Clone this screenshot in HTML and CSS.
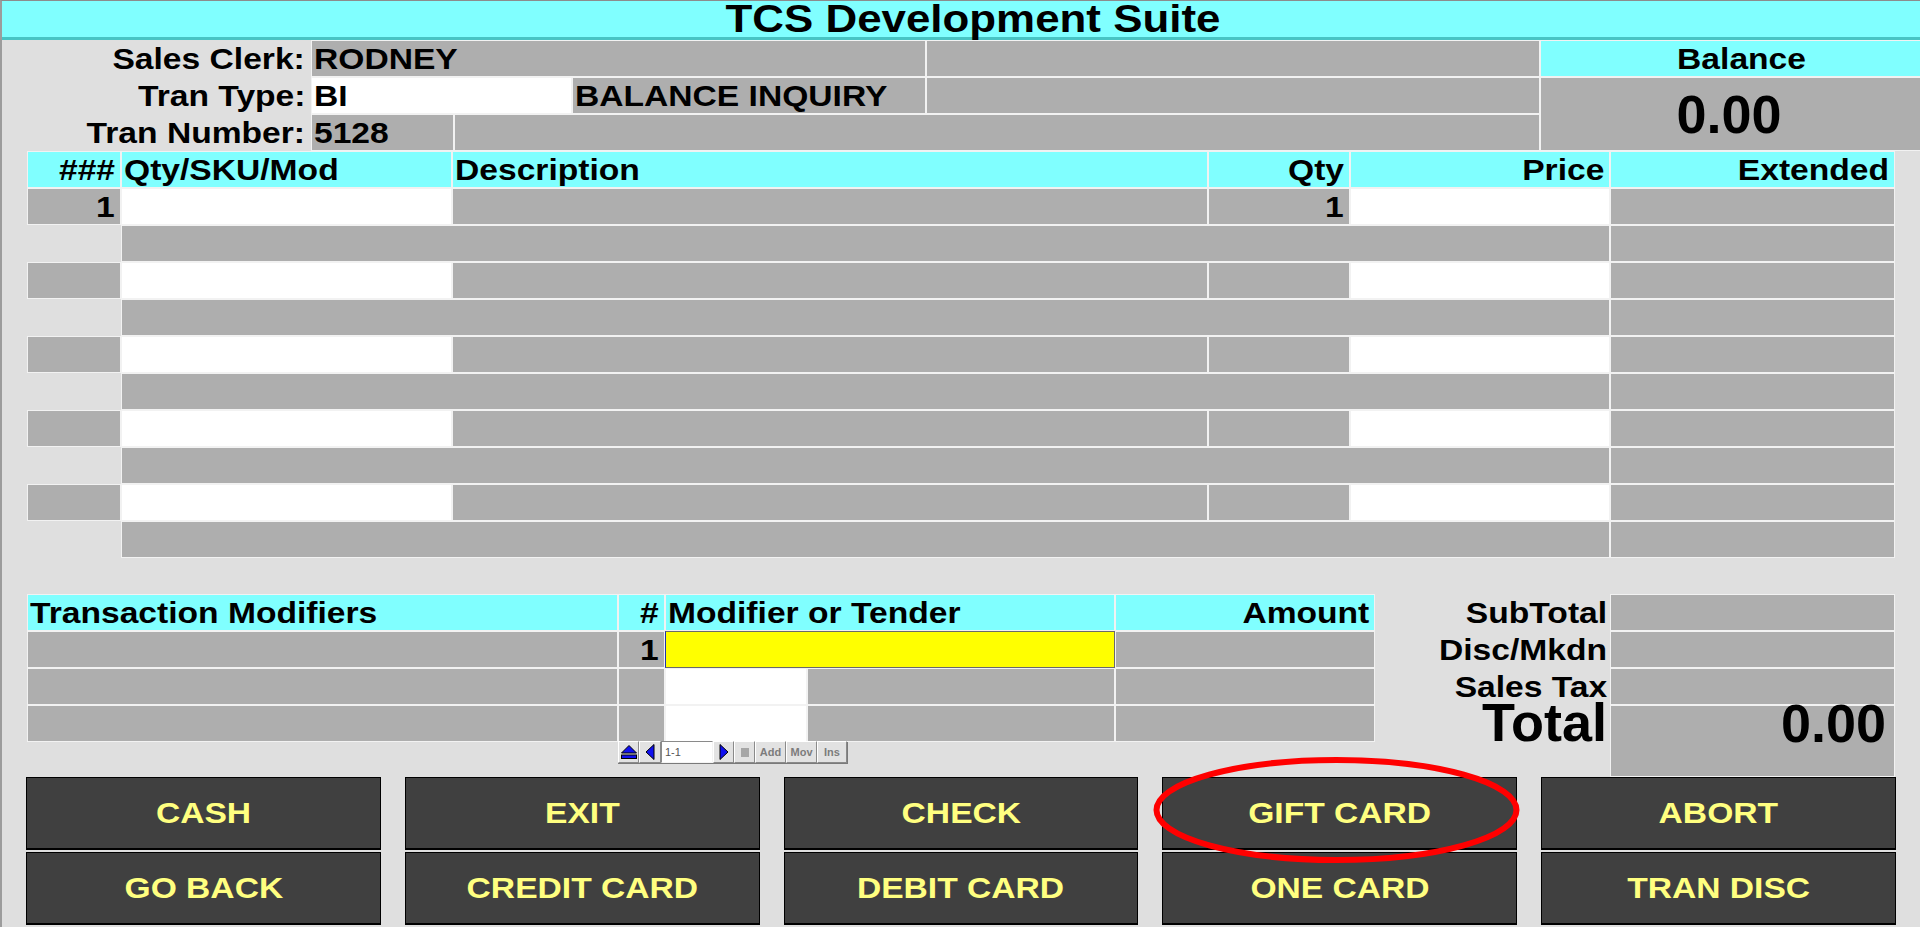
FILE: index.html
```html
<!DOCTYPE html>
<html lang="en">
<head>
<meta charset="utf-8">
<title>TCS Development Suite</title>
<link rel="stylesheet" href="styles.css">
</head>
<body>
<div class="app">
  <div class="title"><span class="t">TCS Development Suite</span></div>

  <div class="top">
    <div class="lbl"><span class="t">Sales Clerk:</span></div>
    <div class="cell g s3"><span class="t">RODNEY</span></div>
    <div class="cell g"></div>
    <div class="cell cy c"><span class="t">Balance</span></div>

    <div class="lbl"><span class="t">Tran Type:</span></div>
    <div class="cell w s2"><span class="t">BI</span></div>
    <div class="cell g"><span class="t">BALANCE INQUIRY</span></div>
    <div class="cell g"></div>
    <div class="cell g bal"><span>0.00</span></div>

    <div class="lbl"><span class="t">Tran Number:</span></div>
    <div class="cell g"><span class="t">5128</span></div>
    <div class="cell g s3"></div>
  </div>

  <div class="items">
    <div class="cell cy r"><span class="t">###</span></div>
    <div class="cell cy"><span class="t">Qty/SKU/Mod</span></div>
    <div class="cell cy"><span class="t">Description</span></div>
    <div class="cell cy r"><span class="t">Qty</span></div>
    <div class="cell cy r"><span class="t">Price</span></div>
    <div class="cell cy r"><span class="t">Extended</span></div>

    <div class="cell g r"><span class="t">1</span></div>
    <div class="cell w"></div>
    <div class="cell g"></div>
    <div class="cell g r"><span class="t">1</span></div>
    <div class="cell w"></div>
    <div class="cell g"></div>
    <div class="cell e"></div>
    <div class="cell g s4"></div>
    <div class="cell g"></div>

    <div class="cell g"></div>
    <div class="cell w"></div>
    <div class="cell g"></div>
    <div class="cell g"></div>
    <div class="cell w"></div>
    <div class="cell g"></div>
    <div class="cell e"></div>
    <div class="cell g s4"></div>
    <div class="cell g"></div>

    <div class="cell g"></div>
    <div class="cell w"></div>
    <div class="cell g"></div>
    <div class="cell g"></div>
    <div class="cell w"></div>
    <div class="cell g"></div>
    <div class="cell e"></div>
    <div class="cell g s4"></div>
    <div class="cell g"></div>

    <div class="cell g"></div>
    <div class="cell w"></div>
    <div class="cell g"></div>
    <div class="cell g"></div>
    <div class="cell w"></div>
    <div class="cell g"></div>
    <div class="cell e"></div>
    <div class="cell g s4"></div>
    <div class="cell g"></div>

    <div class="cell g"></div>
    <div class="cell w"></div>
    <div class="cell g"></div>
    <div class="cell g"></div>
    <div class="cell w"></div>
    <div class="cell g"></div>
    <div class="cell e"></div>
    <div class="cell g s4"></div>
    <div class="cell g"></div>
  </div>

  <div class="bottom">
    <div class="mods-wrap">
      <div class="mods">
        <div class="cell cy"><span class="t">Transaction Modifiers</span></div>
        <div class="cell cy r"><span class="t">#</span></div>
        <div class="cell cy s2"><span class="t">Modifier or Tender</span></div>
        <div class="cell cy r"><span class="t">Amount</span></div>

        <div class="cell g"></div>
        <div class="cell g r"><span class="t">1</span></div>
        <div class="cell y s2"></div>
        <div class="cell g"></div>

        <div class="cell g"></div>
        <div class="cell g"></div>
        <div class="cell w"></div>
        <div class="cell g"></div>
        <div class="cell g"></div>

        <div class="cell g"></div>
        <div class="cell g"></div>
        <div class="cell w"></div>
        <div class="cell g"></div>
        <div class="cell g"></div>
      </div>
      <div class="nav">
        <div class="nb w21">
          <svg width="18" height="18" viewBox="0 0 18 18"><polygon points="1.5,10 9,2.5 16.5,10" fill="#1010f0" stroke="#000" stroke-width="1"/><rect x="1.5" y="12" width="15" height="3.5" fill="#1010f0" stroke="#000" stroke-width="1"/></svg>
        </div>
        <div class="nb w22">
          <svg width="12" height="18" viewBox="0 0 12 18"><polygon points="10,1.5 2,9 10,16.5" fill="#1010f0" stroke="#000" stroke-width="1"/></svg>
        </div>
        <div class="nin">1-1</div>
        <div class="nb w21">
          <svg width="12" height="18" viewBox="0 0 12 18"><polygon points="2,1.5 10,9 2,16.5" fill="#1010f0" stroke="#000" stroke-width="1"/></svg>
        </div>
        <div class="nb w21"><span class="stop"></span></div>
        <div class="nb w31 nt">Add</div>
        <div class="nb w31 nt">Mov</div>
        <div class="nb w30 nt">Ins</div>
      </div>
    </div>

    <div class="totals">
      <div class="tl"><span class="t">SubTotal</span></div>
      <div class="cell g"></div>
      <div class="tl"><span class="t">Disc/Mkdn</span></div>
      <div class="cell g"></div>
      <div class="tl"><span class="t">Sales Tax</span></div>
      <div class="cell g"></div>
      <div class="tl total">Total</div>
      <div class="cell g tbox">0.00</div>
    </div>
  </div>

  <div class="buttons">
    <div class="btn"><span class="t">CASH</span></div>
    <div class="btn"><span class="t">EXIT</span></div>
    <div class="btn"><span class="t">CHECK</span></div>
    <div class="btn"><span class="t">GIFT CARD</span></div>
    <div class="btn"><span class="t">ABORT</span></div>
    <div class="btn"><span class="t">GO BACK</span></div>
    <div class="btn"><span class="t">CREDIT CARD</span></div>
    <div class="btn"><span class="t">DEBIT CARD</span></div>
    <div class="btn"><span class="t">ONE CARD</span></div>
    <div class="btn"><span class="t">TRAN DISC</span></div>
  </div>

  <svg class="ring" width="374" height="112" viewBox="0 0 374 112"><ellipse cx="186.5" cy="56" rx="180" ry="50" fill="none" stroke="#ff0000" stroke-width="6"/></svg>
</div>
</body>
</html>
```

FILE: styles.css
```css
* { box-sizing: border-box; }
html, body { margin: 0; padding: 0; }
body {
  background: #dfdfdf;
  font-family: "Liberation Sans", Arial, sans-serif;
  font-weight: bold;
  color: #000;
  overflow: hidden;
  width: 1920px;
  height: 927px;
}
.app {
  position: relative;
  width: 1944px;
  height: 927px;
  border-left: 2px solid #9c9c9c;
  border-top: 1px solid #8c8c8c;
  overflow: hidden;
}

/* stretched text (the original UI renders a little wide) */
.t {
  display: inline-block;
  transform: scaleX(1.12);
  transform-origin: left center;
}
.r { text-align: right; }
.c { text-align: center; }
.r .t, .lbl .t, .tl .t { transform-origin: right center; }
.c .t, .btn .t { transform-origin: center center; }

/* title */
.title {
  height: 39px;
  background: #80ffff;
  border-bottom: 3px solid #48c4c4;
  text-align: center;
  font-size: 39px;
  line-height: 36px;
}
.title .t { transform: scaleX(1.125); transform-origin: center center; }

/* generic cell */
.cell {
  height: 37px;
  border: 1px solid #f2f2f2;
  font-size: 30px;
  line-height: 35px;
  padding: 0 2px;
  white-space: nowrap;
  overflow: hidden;
}
.cell.r { padding: 0 5px 0 2px; }
.g { background: #aeaeae; }
.w { background: #ffffff; }
.cy { background: #80ffff; }
.y {
  background: #ffff00;
  border-color: #6a6a6a;
  border-left-color: #2233aa;
}
.e { background: transparent; border-color: transparent; }
.s2 { grid-column: span 2; }
.s3 { grid-column: span 3; }
.s4 { grid-column: span 4; }

/* header info block */
.top {
  display: grid;
  grid-template-columns: 309px 143px 118px 354px 614px 404px;
  grid-auto-rows: 37px;
}
.lbl {
  font-size: 30px;
  line-height: 37px;
  text-align: right;
  padding-right: 6px;
  white-space: nowrap;
}
.bal {
  grid-row: span 2;
  height: 74px;
  text-align: center;
  font-size: 54px;
  line-height: 72px;
  padding-right: 28px;
}

/* line items */
.items {
  display: grid;
  grid-template-columns: 94px 331px 756px 142px 260px 285px;
  grid-auto-rows: 37px;
  margin-left: 25px;
}

/* bottom area */
.bottom {
  display: flex;
  align-items: flex-start;
  margin-top: 36px;
}
.mods-wrap { margin-left: 25px; }
.mods {
  display: grid;
  grid-template-columns: 591px 47px 142px 308px 260px;
  grid-auto-rows: 37px;
}
.nav {
  display: flex;
  margin-left: 591px;
  margin-top: -1px;
  width: 230px;
  height: 23px;
  border-right: 1px solid #7a7a7a;
  border-bottom: 1px solid #7a7a7a;
  background: #e0e0e0;
}
.nb {
  height: 22px;
  display: flex;
  align-items: center;
  justify-content: center;
  background: #e2e2e2;
  border: 1px solid;
  border-color: #ffffff #8a8a8a #8a8a8a #ffffff;
}
.w21 { width: 21px; }
.w22 { width: 22px; }
.w30 { width: 30px; }
.w31 { width: 31px; }
.nin {
  width: 52px;
  height: 22px;
  background: #fff;
  border: 1px solid;
  border-color: #8a8a8a #f4f4f4 #f4f4f4 #8a8a8a;
  font-size: 11px;
  line-height: 20px;
  padding-left: 3px;
  color: #555;
  font-weight: normal;
}
.nt {
  font-size: 11px;
  color: #7c7c7c;
}
.stop {
  display: block;
  width: 8px;
  height: 9px;
  background: #a6a6a6;
}

/* totals */
.totals {
  margin-left: auto;
  margin-right: 49px;
  display: grid;
  grid-template-columns: auto 285px;
  grid-template-rows: 37px 37px 37px 72px;
}
.tl {
  font-size: 30px;
  line-height: 37px;
  text-align: right;
  padding-right: 3px;
  white-space: nowrap;
}
.total {
  font-size: 54px;
  line-height: 34px;
  align-self: start;
}
.tbox {
  height: 72px;
  text-align: right;
  font-size: 54px;
  line-height: 34px;
  padding-right: 8px;
  overflow: visible;
}

/* buttons */
.buttons {
  display: grid;
  grid-template-columns: repeat(5, 1fr);
  grid-template-rows: 73px 73px;
  gap: 2px 24px;
  margin: 0 48px 0 24px;
}
.btn {
  background: #404040;
  border: 1px solid #000;
  border-bottom-width: 2px;
  color: #ffff80;
  font-size: 30px;
  display: flex;
  align-items: center;
  justify-content: center;
  white-space: nowrap;
}

/* highlight annotation */
.ring {
  position: absolute;
  left: 1148px;
  top: 753px;
}
```
